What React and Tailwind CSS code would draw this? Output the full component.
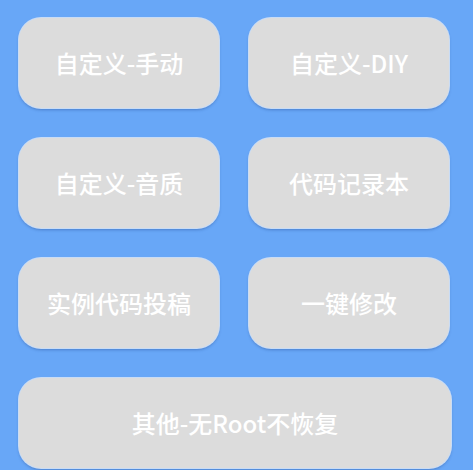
const items = [
  "自定义-手动",
  "自定义-DIY",
  "自定义-音质",
  "代码记录本",
  "实例代码投稿",
  "一键修改",
];

const btn =
  "flex items-center justify-center rounded-[22px] bg-[#dcdcdc] text-white text-[24px] font-medium shadow-[0_2px_3px_rgba(40,80,150,0.45)] ring-1 ring-[#c9dcf5]";

export default function App() {
  return (
    <div
      className="w-[473px] h-[470px] overflow-hidden bg-[#68a7f7] pt-[18px] pl-[19px]"
      style={{ fontFamily: '"Noto Sans CJK SC", "Noto Sans", sans-serif' }}
    >
      <div className="grid grid-cols-[200px_200px] auto-rows-[90px] gap-[30px]">
        {items.map((t) => (
          <button key={t} className={btn}>
            {t}
          </button>
        ))}
        <button className={`${btn} col-span-2 w-[432px]`}>其他-无Root不恢复</button>
      </div>
    </div>
  );
}
